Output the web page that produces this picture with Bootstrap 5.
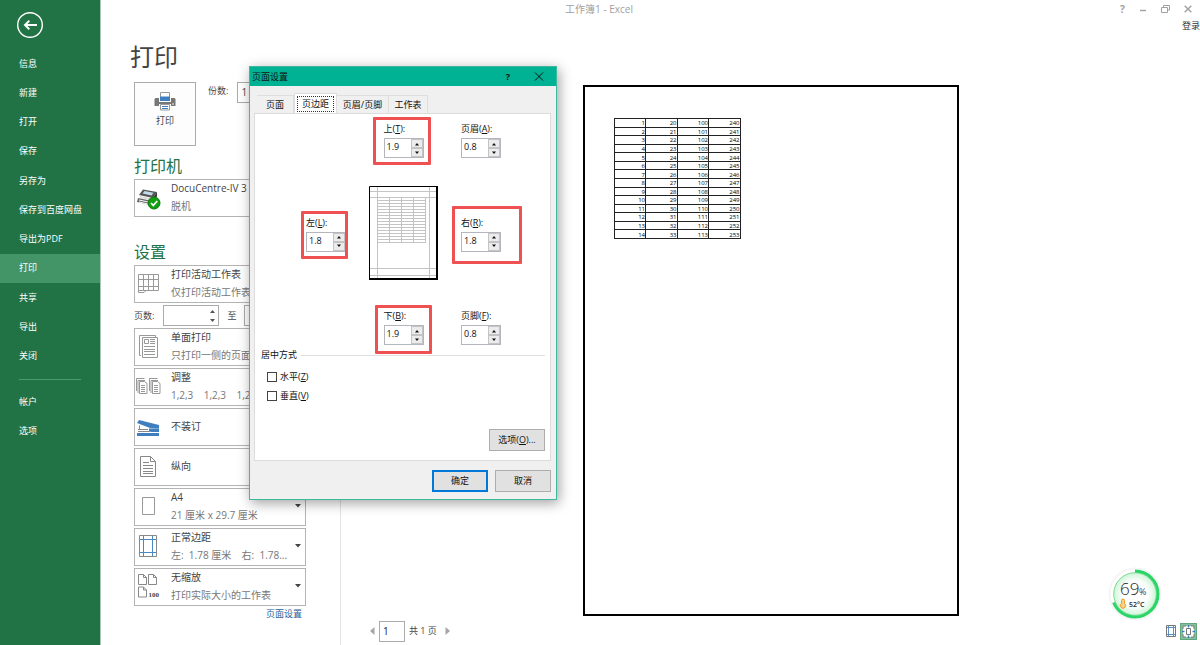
<!DOCTYPE html>
<html lang="zh-CN">
<head>
<meta charset="utf-8">
<meta name="viewport" content="width=device-width, initial-scale=1">
<title>工作簿1 - Excel</title>
<link href="https://cdn.jsdelivr.net/npm/bootstrap@5.3.0/dist/css/bootstrap.min.css" rel="stylesheet">
<style>
  body { font-family: "Open Sans", "Noto Sans CJK SC", sans-serif; font-size: 10px; line-height: 18px; color: #444; background: #fff; }
  button, input { font: inherit; color: inherit; }
  svg { display: block; flex: none; }

  /* backstage navigation */
  .side { width: 100px; background: #217346; font-size: 9px; box-shadow: 1px 0 0 #a9c8b6; }
  .side .back { padding: 11px 0 0 16px; height: 49px; }
  .side .side-main { height: 322px; }
  .side .side-more { height: 58px; }
  .side a { color: #fff; text-decoration: none; padding-left: 19px; flex: 1; display: flex; align-items: center; }
  .side a.active { background: #439467; }
  .side hr { margin: 8px 19px 7px; border-color: #4b9b6d; opacity: 1; }

  /* window header */
  .topbar { height: 17px; color: #a0a0a0; }
  .win-tools { width: 102px; padding: 0 8px 0 22px; color: #a0a0a0; }
  .plain { border: 0; background: none; padding: 0; line-height: 1; }
  .signin { font-size: 9px; line-height: 18px; color: #333; text-decoration: none; }
  .page-title { font-size: 24px; line-height: 43px; padding: 0 0 4px 30px; font-weight: 400; color: #444; }

  /* settings column */
  .settings { width: 241px; padding: 0 35px 0 34px; border-right: 1px solid #e3e3e3; }
  .print-btn { width: 62px; height: 64px; border: 1px solid #ababab; background: #fdfdfd; font-size: 9px; line-height: 12px; padding: 0 0 10px; }
  .small-label { font-size: 9px; white-space: nowrap; }
  .sec { font-size: 16px; line-height: 24px; color: #217346; margin: 0; font-weight: 400; }
  .sec-a { margin: 8px 0 1px; }
  .sec-b { margin: 23px 0 1px; }
  .pick { width: 172px; height: 38px; border: 1px solid #b4b4b4; background: #fff; padding: 0 4px 2px 0; text-align: left; gap: 10px; margin-bottom: 2px; }
  .pick svg.ico { width: 26px; height: 30px; }
  .pick .sub { color: #777; display: block; white-space: pre; }
  .pick .txt { flex: 1; min-width: 0; white-space: nowrap; }
  .pages { height: 21px; margin-bottom: 2px; white-space: nowrap; }
  .num-box { border: 1px solid #ababab; height: 21px; background: #fff; }
  .num-box input { border: 0; width: 100%; min-width: 0; padding: 0 3px; outline: 0; background: none; }
  .w-pages { width: 56px; margin-left: 9px; }
  .w-copies { width: 56px; margin-left: 9px; }
  .setup-link { font-size: 9px; line-height: 12px; color: #2b6299; text-decoration: none; margin-right: 3px; }

  /* sheet preview */
  .sheet { width: 376px; aspect-ratio: 376 / 531; border: 2px solid #000; padding: 31px 0 0 29px; margin-top: 3px; }
  .sheet table { width: 127px; height: 121px; table-layout: fixed; border-collapse: collapse; font: 6px/6px "Open Sans", sans-serif; color: #000; }
  .sheet td { border: 1px solid #222; text-align: right; padding: 1px 0 0; }
  .foot { height: 29px; padding: 1px 3px 0 28px; }
  .foot .num-box { width: 26px; color: #222; }
  .view-on { background: #86bf9f; }

  /* page setup dialog */
  .dlg { position: absolute; left: 249px; top: 66px; width: 308px; background: #f0f0f0; border: 1px solid #3fb8a0; box-shadow: 2px 3px 12px rgba(0,0,0,.38); font-size: 9px; line-height: 16px; color: #111; }
  .dlg-head { height: 19px; background: #00b294; padding: 0 12px 0 2px; }
  .tabs { padding: 7px 0 0 7px; height: 27px; }
  .tabs button { border: 1px solid #dedede; border-width: 1px 1px 0 0; background: #f0f0f0; padding: 0; height: 18px; line-height: 16px; }
  .tabs .t-a { width: 37px; }
  .tabs .t-b { width: 43px; height: 20px; background: #fff; border-left-width: 1px; padding: 1px 2px 0; }
  .tabs .t-b span { display: block; border: 1px dotted #333; line-height: 14px; }
  .tabs .t-c { width: 52px; }
  .tabs .t-d { width: 39px; }
  .pane { margin: 0 5px 0 4px; background: #fff; border: 1px solid #dcdcdc; padding: 7px 5px 9px 6px; }
  .margins { display: grid; grid-template-columns: 40px 69px 40px; column-gap: 23px; row-gap: 28px; padding-left: 45px; align-items: center; justify-items: center; }
  .fld { position: relative; width: 40px; white-space: nowrap; }
  .fld label { display: block; margin-bottom: 1px; }
  .spin { display: flex; height: 20px; border: 1px solid #b5b5bd; background: #fff; }
  .spin input { width: 26px; border: 0; padding: 0 0 2px 2px; outline: 0; background: #fff; }
  .spin .ud { width: 12px; display: flex; flex-direction: column; }
  .spin .ud button { flex: 1; border: 1px solid #c4c4c4; background: #ececec; padding: 0; display: flex; align-items: center; justify-content: center; }
  .mark-box::after { content: ""; position: absolute; border: 3px solid #ef5052; border-radius: 1px; pointer-events: none; }
  .mk-t::after { inset: -4px -7px -7px -11px; }
  .mk-l::after { inset: -4px -2px -7px -5px; }
  .mk-r::after { inset: -9px -21px -12px -9px; }
  .mk-b::after { inset: -3px -8px -9px -9px; }
  .dlg legend { float: none; width: auto; font-size: 9px; line-height: 16px; margin: 0; padding-right: 4px; }
  .dlg fieldset { margin-top: 2px; }
  .rule { height: 1px; background: #e0e0e0; flex: 1; }
  .tick { height: 19px; display: flex; align-items: center; gap: 3px; padding-left: 6px; }
  .tick input { appearance: none; width: 10px; height: 10px; margin: 0; border: 1px solid #444; background: #fff; }
  .dbtn { width: 56px; height: 22px; border: 1px solid #adadad; background: #e1e1e1; padding: 0; line-height: 20px; }
  .dbtn.ok { border: 2px solid #0078d7; line-height: 18px; }
  .dlg-foot { padding: 9px 5px 7px; gap: 7px; }
  .gauge { position: absolute; right: 38px; bottom: 24px; }
</style>
</head>
<body>
<div class="d-flex min-vh-100 position-relative">
  <nav class="side d-flex flex-column flex-shrink-0" aria-label="文件">
    <div class="back">
      <button class="plain" type="button" aria-label="返回">
        <svg width="28" height="28" viewBox="0 0 28 28" fill="none" stroke="#fff"><circle cx="14" cy="14" r="12.3" stroke-width="1.4"/><path d="M21 14H9M13.3 9.8L9 14l4.3 4.2" stroke-width="2"/></svg>
      </button>
    </div>
    <div class="side-main d-flex flex-column">
      <a href="#">信息</a><a href="#">新建</a><a href="#">打开</a><a href="#">保存</a><a href="#">另存为</a><a href="#">保存到百度网盘</a><a href="#">导出为PDF</a><a href="#" class="active" aria-current="page">打印</a><a href="#">共享</a><a href="#">导出</a><a href="#">关闭</a>
    </div>
    <hr>
    <div class="side-more d-flex flex-column"><a href="#">帐户</a><a href="#">选项</a></div>
  </nav>

  <main class="flex-grow-1 d-flex flex-column">
    <header>
      <div class="topbar d-flex">
        <div class="flex-grow-1 text-center">工作簿1 - Excel</div>
        <div class="win-tools d-flex justify-content-between align-items-center">
          <button class="plain fw-bold" type="button" aria-label="帮助">?</button>
          <button class="plain" type="button" aria-label="最小化"><svg width="8" height="8"><path d="M1 5.500h6" stroke="#a0a0a0" stroke-width="1.4"/></svg></button>
          <button class="plain" type="button" aria-label="还原"><svg width="9" height="8" fill="none" stroke="#a0a0a0"><path d="M2.500 2.500V.5h6v4.500h-2M.5 2.500h6v5h-6z"/></svg></button>
          <button class="plain" type="button" aria-label="关闭"><svg width="8" height="8" stroke="#a0a0a0" stroke-width="1.400"><path d="M.7.7l6.600 6.600M7.300.7L.7 7.300"/></svg></button>
        </div>
      </div>
      <div class="text-end signin"><a class="signin" href="#">登录</a></div>
      <h1 class="page-title mb-0">打印</h1>
    </header>

    <div class="d-flex flex-grow-1">
      <section class="settings flex-shrink-0">
        <div class="d-flex">
          <button class="print-btn flex-shrink-0 d-flex flex-column align-items-center justify-content-center gap-1" type="button">
            <svg width="22" height="20" viewBox="0 0 22 20"><path d="M6.500 7V1.500h9V7" fill="#fff" stroke="#999"/><path d="M6 5.500h10V10H6z" fill="#3f7fc0"/><path d="M1.500 7H5v4h12V7h3.500l1 1v7H17v-2H5v2H.5V8z" fill="#777"/><path d="M6.500 13.500h9v5.500h-9z" fill="#fff" stroke="#999"/><path d="M8 15.500h6M8 17.500h6" stroke="#3f7fc0"/><circle cx="19" cy="13" r=".8" fill="#fff"/></svg>
            打印
          </button>
          <label for="copies" class="small-label ms-2 ps-1">份数:</label>
          <div class="num-box w-copies flex-shrink-0"><input id="copies" value="1"></div>
        </div>

        <h2 class="sec sec-a">打印机</h2>
        <button class="pick d-flex align-items-center" type="button">
          <svg class="ico" viewBox="0 0 26 30"><path d="M8 7.500l14 2.500-4 6-14-3z" fill="#555"/><path d="M9.500 9l9 1.700-2 2.800-9-2z" fill="#c3dbe8"/><path d="M5 14l12 2.600v2L5 16z" fill="#ddd"/><path d="M3 16l14 3v4.500L2 20z" fill="#666"/><path d="M4 18l10 2.200M4 20l9 2" stroke="#fff"/><path d="M18 16l4-6v4l-4 7z" fill="#333"/><circle cx="19" cy="21" r="6" fill="#12a012" stroke="#0b7d0b"/><path d="M16 21l2.300 2.400 4-4.400" fill="none" stroke="#fff" stroke-width="1.700"/></svg>
          <span class="txt">DocuCentre-IV 3<span class="sub">脱机</span></span>
        </button>

        <h2 class="sec sec-b">设置</h2>
        <button class="pick d-flex align-items-center" type="button">
          <svg class="ico" viewBox="0 0 26 30" fill="none" stroke="#999"><path d="M3.500 6.500h20v16H11l-2 2H3.500z" fill="#fff"/><path d="M8.500 6v16M13.500 6v16M18.500 6v16M3 11.500h21M3 18.500h21M3.500 22.500H11"/></svg>
          <span class="txt">打印活动工作表<span class="sub">仅打印活动工作表</span></span>
        </button>
        <div class="pages d-flex align-items-center">
          <label for="from" class="small-label">页数:</label>
          <div class="num-box w-pages flex-shrink-0 d-flex align-items-center"><input id="from"><svg width="12" height="17" viewBox="0 0 12 17" fill="#555"><path d="M4 6l2.500-3L9 6zM4 12h5l-2.500 3z"/></svg></div>
          <label for="to" class="mx-2 small-label">至</label>
          <div class="num-box w-copies flex-shrink-0 ms-0"><input id="to"></div>
        </div>
        <button class="pick d-flex align-items-center" type="button">
          <svg class="ico" viewBox="0 0 26 30" fill="none" stroke="#999"><path d="M6 24.500H4.500V4.500h16V6"/><path d="M7.500 6.500h15v20h-15z" fill="#fff"/><path d="M9.500 8.500h4v4h-4zM15 8.500h5M15 10.500h5M15 12.500h5M9 15.500h11M9 18.500h11M9 20.500h11M9 23.500h11"/></svg>
          <span class="txt">单面打印<span class="sub">只打印一侧的页面</span></span>
        </button>
        <button class="pick d-flex align-items-center" type="button">
          <svg class="ico" viewBox="0 0 26 30" fill="none" stroke="#999"><g id="stack"><path d="M1.500 20V7.500h8M3 22V9.500h7"/><path d="M4.500 10.500h5l2.500 2v10H4.500z" fill="#fff"/><path d="M6 14.500h4M6 16.500h4M6 18.500h4M6 20.500h4"/></g><use href="#stack" x="13"/></svg>
          <span class="txt">调整<span class="sub">1,2,3    1,2,3    1,2,3</span></span>
        </button>
        <button class="pick d-flex align-items-center" type="button">
          <svg class="ico" viewBox="0 0 26 30"><path d="M4 9l20 5v3.500l-9-.5L2 12z" fill="#3f7fc0"/><path d="M14 17.500h10v3.500h-8l-2-1zM2 22h22v3H2z" fill="#3f7fc0"/><path d="M4.500 14.500v4M3 18.500h10M3 20.500h12" fill="none" stroke="#888"/></svg>
          <span class="txt">不装订</span>
        </button>
        <button class="pick d-flex align-items-center" type="button">
          <svg class="ico" viewBox="0 0 26 30" fill="none" stroke="#888"><path d="M5.500 5.500h10l5 5v15h-15z" fill="#fff"/><path d="M15.500 5.500v5h5M8 11.500h6M8 14.500h10M8 17.500h10M8 20.500h10M8 22.500h10"/></svg>
          <span class="txt">纵向</span>
        </button>
        <button class="pick d-flex align-items-center" type="button">
          <svg class="ico" viewBox="0 0 26 30" fill="none" stroke="#999"><path d="M7.500 6.500h12v17h-12z"/></svg>
          <span class="txt">A4<span class="sub">21 厘米 x 29.7 厘米</span></span>
          <svg width="6" height="4"><path d="M0 0h6L3 3.500z" fill="#444"/></svg>
        </button>
        <button class="pick d-flex align-items-center" type="button">
          <svg class="ico" viewBox="0 0 26 30" fill="none"><path d="M4.500 4.500h17v21h-17z" stroke="#888"/><path d="M8.500 5v20M17.500 5v20M5 8.500h16M5 21.500h16" stroke="#4a88c4"/></svg>
          <span class="txt">正常边距<span class="sub">左:  1.78 厘米    右:  1.78...</span></span>
          <svg width="6" height="4"><path d="M0 0h6L3 3.500z" fill="#444"/></svg>
        </button>
        <button class="pick d-flex align-items-center" type="button">
          <svg class="ico" viewBox="0 0 26 30" fill="none" stroke="#888"><path id="leaf" d="M3.500 3.500h5l3 3v7h-8zM8.500 3.500v3h3"/><use href="#leaf" x="10"/><use href="#leaf" y="12.500"/><text x="13.500" y="25.500" font-family="Liberation Serif, serif" font-weight="bold" font-size="7" fill="#444" stroke="none">100</text></svg>
          <span class="txt">无缩放<span class="sub">打印实际大小的工作表</span></span>
          <svg width="6" height="4"><path d="M0 0h6L3 3.500z" fill="#444"/></svg>
        </button>
        <div class="d-flex justify-content-end"><a class="setup-link" href="#">页面设置</a></div>
      </section>

      <section class="flex-grow-1 d-flex flex-column align-items-center justify-content-between" aria-label="预览">
        <div class="sheet">
          <table><tbody id="rows"></tbody></table>
        </div>
        <div class="foot d-flex align-items-center w-100">
          <button class="plain" type="button" aria-label="上一页"><svg width="6" height="8"><path d="M5.500 0v8L1 4z" fill="#a6a6a6"/></svg></button>
          <div class="num-box ms-1"><input value="1" aria-label="页码"></div>
          <span class="small-label ms-1">共 1 页</span>
          <button class="plain ms-2" type="button" aria-label="下一页"><svg width="6" height="8"><path d="M.5 0v8L5 4z" fill="#a6a6a6"/></svg></button>
          <button class="plain ms-auto me-1" type="button" aria-label="显示边距"><svg width="10" height="12" viewBox="0 0 10 12" fill="none"><path d="M.5.5h9v11h-9z" stroke="#777"/><path d="M2.500 1v10M7.500 1v10M1 2.500h8M1 9.500h8" stroke="#5a8fc8"/></svg></button>
          <button class="plain view-on" type="button" aria-label="缩放到页面"><svg width="17" height="17" viewBox="0 0 17 17" fill="none"><path d="M.5.5h16v16H.5z" stroke="#5fa67d"/><path d="M3 3h11v11H3z" fill="#fff" stroke="#777" stroke-dasharray="3 5 6 5 6 5 6 5 3"/><path d="M6.500 5.500h4v6h-4z" stroke="#777"/><path d="M8.500 2v2.500M8.500 12.500V15M2 8.500h2.500M12.500 8.500H15" stroke="#3f7fc0" stroke-width="1.500"/></svg></button>
        </div>
      </section>
    </div>
  </main>

  <div class="dlg" role="dialog" aria-labelledby="dlg-title">
    <div class="dlg-head d-flex align-items-center">
      <span id="dlg-title" class="flex-grow-1">页面设置</span>
      <button class="plain fw-bold me-4" type="button" aria-label="帮助">?</button>
      <button class="plain" type="button" aria-label="关闭"><svg width="10" height="9" stroke="#111"><path d="M1 .5l8 8M9 .5l-8 8"/></svg></button>
    </div>
    <div class="tabs d-flex align-items-end" role="tablist">
      <button class="t-a" role="tab" type="button">页面</button>
      <button class="t-b" role="tab" type="button" aria-selected="true"><span>页边距</span></button>
      <button class="t-c" role="tab" type="button">页眉/页脚</button>
      <button class="t-d" role="tab" type="button">工作表</button>
    </div>
    <div class="pane">
      <div class="margins">
        <span></span>
        <div class="fld mark-box mk-t"><label for="m-t">上(<u>T</u>):</label><div class="spin"><input id="m-t" value="1.9"></div></div>
        <div class="fld"><label for="m-h">页眉(<u>A</u>):</label><div class="spin"><input id="m-h" value="0.8"></div></div>
        <div class="fld mark-box mk-l"><label for="m-l">左(<u>L</u>):</label><div class="spin"><input id="m-l" value="1.8"></div></div>
        <svg width="69" height="94" viewBox="0 0 69 94" fill="none"><path d="M8.500 1v92M60.500 1v92M1 5.500h67M1 11.500h67M1 82.500h67M1 89.500h67M20.500 11v46M32.500 11v46M44.500 11v46M56.500 11v46M9 14.500h48M9 17.500h48M9 20.500h48M9 23.500h48M9 26.500h48M9 29.500h48M9 32.500h48M9 35.500h48M9 38.500h48M9 41.500h48M9 44.500h48M9 47.500h48M9 50.500h48M9 53.500h48M9 56.500h48" stroke="#c4c4c4"/><path d="M.5 94V.5H69" stroke="#000"/><path d="M0 93h68V0" stroke="#000" stroke-width="2"/></svg>
        <div class="fld mark-box mk-r"><label for="m-r">右(<u>R</u>):</label><div class="spin"><input id="m-r" value="1.8"></div></div>
        <span></span>
        <div class="fld mark-box mk-b"><label for="m-b">下(<u>B</u>):</label><div class="spin"><input id="m-b" value="1.9"></div></div>
        <div class="fld"><label for="m-f">页脚(<u>F</u>):</label><div class="spin"><input id="m-f" value="0.8"></div></div>
      </div>
      <fieldset>
        <div class="d-flex align-items-center mb-1"><legend>居中方式</legend><span class="rule"></span></div>
        <label class="tick"><input type="checkbox"><span>水平(<u>Z</u>)</span></label>
        <label class="tick"><input type="checkbox"><span>垂直(<u>V</u>)</span></label>
      </fieldset>
      <div class="d-flex justify-content-end mt-4"><button class="dbtn" type="button">选项(<u>O</u>)...</button></div>
    </div>
    <div class="d-flex justify-content-end dlg-foot"><button class="dbtn ok" type="button">确定</button><button class="dbtn" type="button">取消</button></div>
  </div>

  <svg class="gauge" width="54" height="54" viewBox="0 0 54 54">
    <defs><radialGradient id="glow"><stop offset=".55" stop-color="#fff"/><stop offset="1" stop-color="#c4f3d0"/></radialGradient></defs>
    <circle cx="27" cy="27" r="26.500" fill="#f5f5f5"/>
    <circle cx="27" cy="27" r="23" fill="url(#glow)" stroke="#fff" stroke-width="3"/>
    <circle cx="27" cy="27" r="21.300" fill="none" stroke="#7fdc96" stroke-width="1"/>
    <circle cx="27" cy="27" r="23" fill="none" stroke="#28d566" stroke-width="3" pathLength="100" stroke-dasharray="69 31" transform="rotate(-90 27 27)"/>
    <text x="12" y="28" font-family="Open Sans, sans-serif" font-weight="300" font-size="17" fill="#222">69</text>
    <text x="31" y="28" font-family="Open Sans, sans-serif" font-size="9" fill="#444">%</text>
    <path d="M13.500 33.500a1.500 1.500 0 0 1 3 0v3a2.600 2.600 0 1 1-3 0z" fill="#fbd08a" stroke="#f39a1e"/>
    <text x="21" y="40" font-family="Noto Sans, sans-serif" font-size="7" font-weight="600" fill="#333">52°C</text>
  </svg>
</div>
<script>
  // Sheet data: four columns counting up together over fourteen rows
  document.getElementById('rows').innerHTML = Array.from({ length: 14 }, (_, i) =>
    '<tr>' + [1, 20, 100, 240].map(n => '<td>' + (n + i) + '</td>').join('') + '</tr>').join('');
  // Up and down buttons of every margin field
  document.querySelectorAll('.spin').forEach(s => {
    const arrow = d => '<svg width="6" height="4"><path d="' + d + '" fill="#111"/></svg>';
    s.insertAdjacentHTML('beforeend', '<span class="ud"><button type="button" aria-label="增加">' + arrow('M1 3.500h4L3 1z') +
      '</button><button type="button" aria-label="减少">' + arrow('M1 .5h4L3 3z') + '</button></span>');
  });
</script>
<script src="https://cdn.jsdelivr.net/npm/bootstrap@5.3.0/dist/js/bootstrap.bundle.min.js"></script>
</body>
</html>
